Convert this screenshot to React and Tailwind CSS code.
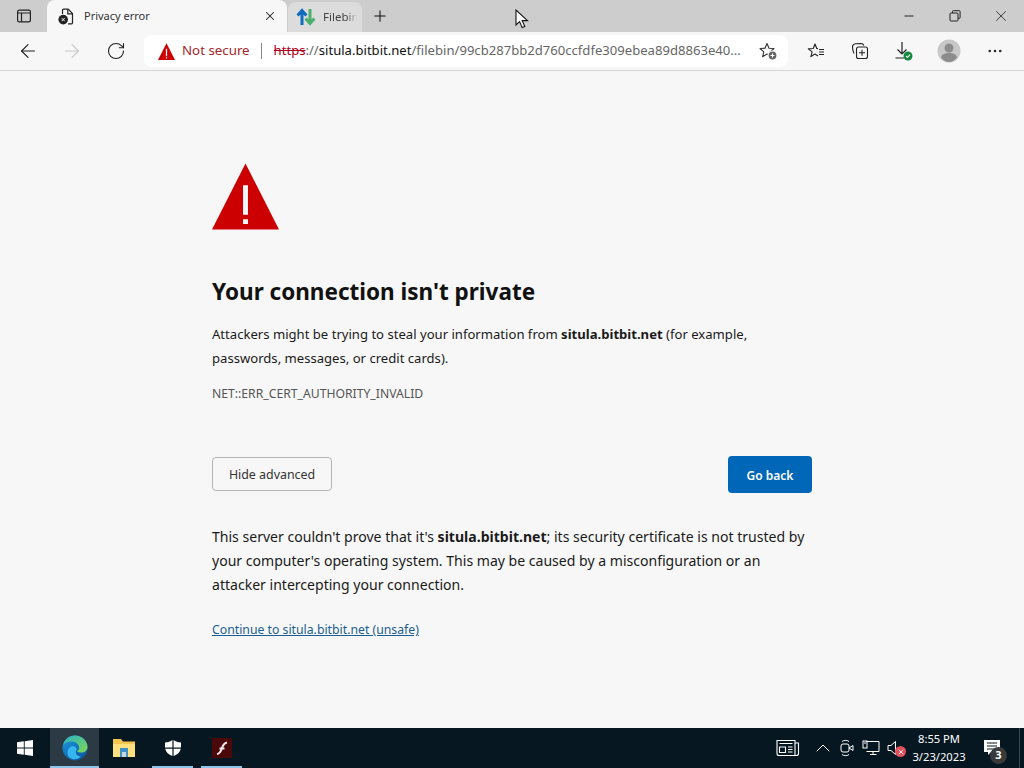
import React from 'react';
import { ArrowLeft, ArrowRight, RotateCw, Plus, X, Minus, MoreHorizontal, ChevronUp } from 'lucide-react';

const Sidebar = () => (
  <svg width="16" height="16" viewBox="0 0 16 16" fill="none" stroke="#222" strokeWidth="1.2">
    <rect x="1.6" y="2.1" width="12.8" height="11.8" rx="1.6" />
    <path d="M2 5h12M5.5 5v8.5" />
  </svg>
);

const PageError = () => (
  <svg width="16" height="17" viewBox="0 0 16 17" fill="none">
    <path d="M4.500 6V2.200A1 1 0 0 1 5.500 1.200h4.700L14.500 5.500v9.300a1 1 0 0 1-1 1H10" stroke="#222" strokeWidth="1.200" />
    <path d="M9.800 1.400v4.400h4.500" stroke="#222" strokeWidth="1.200" />
    <circle cx="5.200" cy="11.600" r="4.800" fill="#222" />
    <path d="M3.700 10.100l3 3M6.700 10.100l-3 3" stroke="#fff" strokeWidth="1" />
  </svg>
);

const Arrows = () => (
  <svg width="20" height="20" viewBox="0 0 20 20" fill="none" strokeWidth="3">
    <path d="M6 18V4M1.600 8.400L6 3.400l4.400 5" stroke="#0f6cbd" />
    <path d="M14 2v14M9.600 11.600l4.400 5 4.400-5" stroke="#4caf6e" />
  </svg>
);

const Warn = ({ size, className }) => (
  <svg width={size} height={size} viewBox="0 0 68 67" className={className}>
    <path d="M34 0L68 67H0Z" fill="#cc0000" />
    <path d="M31.500 22h5v30h-5zM31.500 56.500h5v5h-5z" fill="#f7f7f7" />
  </svg>
);

const StarAdd = () => (
  <svg width="20" height="20" viewBox="0 0 20 20" fill="none">
    <path d="M9 2.500l2 4.700 5 .3-3.800 3.300 1.200 4.900L9 13l-4.400 2.700 1.200-4.900L2 7.500l5-.3z" stroke="#333" strokeWidth="1.100" strokeLinejoin="round" />
    <circle cx="14.500" cy="14.500" r="5" fill="#fff" />
    <circle cx="14.500" cy="14.500" r="3.900" fill="#666" />
    <path d="M14.500 12.500v4M12.500 14.500h4" stroke="#fff" strokeWidth="1" />
  </svg>
);

const Favorites = () => (
  <svg width="18" height="18" viewBox="0 0 18 18" fill="none" stroke="#222" strokeWidth="1.100" strokeLinejoin="round">
    <path d="M11 6.600L9.760 6.570 8 2 6.240 6.570l-4.900.27 3.810 3.090-1.260 4.730L8 12l3 2" />
    <path d="M12 7.500h5M12 10h5M12 12.500h5" />
  </svg>
);

const Collections = () => (
  <svg width="18" height="18" viewBox="0 0 18 18" fill="none" stroke="#222" strokeWidth="1.100">
    <path d="M3 11.500C1.800 9 1.500 7 1.500 5c0-2 1.200-3 3-3.200L10 1.500c1.500 0 2.500.8 2.800 2" />
    <rect x="5.500" y="5" width="11" height="11.500" rx="2" />
    <path d="M11 7.800v6M8 10.800h6" />
  </svg>
);

const Download = () => (
  <svg width="20" height="20" viewBox="0 0 20 20" fill="none">
    <path d="M8 1v12M3.500 8.500L8 13l4.500-4.500M1.500 17h9" stroke="#222" strokeWidth="1.200" />
    <circle cx="14" cy="15" r="4.500" fill="#10893e" />
    <path d="M12 15l1.500 1.500 2.500-2.800" stroke="#fff" strokeWidth="1.100" />
  </svg>
);

const Avatar = () => (
  <svg width="24" height="24" viewBox="0 0 24 24">
    <circle cx="12" cy="12" r="11.500" fill="#c8c8c8" />
    <circle cx="12" cy="9" r="4.500" fill="#8c8c8c" />
    <path d="M4 18.500c1-3.500 4-4.500 8-4.500s7 1 8 4.500c-2 2.700-5 4.500-8 4.500s-6-1.800-8-4.500z" fill="#8c8c8c" />
  </svg>
);

const RestoreIcon = () => (
  <svg width="12" height="12" viewBox="0 0 12 12" fill="none" stroke="#222" strokeWidth="1">
    <rect x="1" y="3" width="8" height="8" rx="1" />
    <path d="M3.500 3V1.500a.8.8 0 0 1 .8-.8h6a.8.8 0 0 1 .8.8v6a.8.8 0 0 1-.8.8H9" />
  </svg>
);

const Cursor = () => (
  <svg width="14" height="20" viewBox="0 0 14 20" className="absolute left-[515px] top-[9px]">
    <path d="M1 1v15l3.600-3.400 2.600 6 2.600-1.100-2.600-5.900H12.500z" fill="#fff" stroke="#111" strokeWidth="1.100" />
  </svg>
);

const WinLogo = () => (
  <svg width="16" height="16" viewBox="0 0 16 16" fill="#fff">
    <path d="M0 2.300l6.800-1v6.300H0zM7.700 1.200L16 0v7.600H7.700zM0 8.400h6.800v6.300L0 13.700zM7.700 8.400H16V16l-8.300-1.200z" />
  </svg>
);

const EdgeLogo = () => (
  <svg width="26" height="26" viewBox="0 0 26 26">
    <defs>
      <linearGradient id="edgeBlue" x1="0" y1="0" x2="0.600" y2="1">
        <stop offset="0" stopColor="#1b9de2" />
        <stop offset="1" stopColor="#0c59a4" />
      </linearGradient>
      <linearGradient id="edgeGreen" x1="0" y1="0" x2="1" y2="1">
        <stop offset="0" stopColor="#2bb0c8" />
        <stop offset="1" stopColor="#7fd84f" />
      </linearGradient>
    </defs>
    <circle cx="13" cy="13" r="12.500" fill="url(#edgeBlue)" />
    <path d="M1 10C3 3.500 8 .5 13 .5c7 0 12.500 5.500 12.500 11.500 0 3.500-3 5.500-6 5.500-2 0-3.500-.5-4.500-1.500 2-1 2.500-2.500 2-4.500C16 8 13 6.500 9.500 6.500 6 6.500 2.800 8 1 10z" fill="url(#edgeGreen)" />
    <path d="M10 11c2 0 4.500 1 5 3.500-3 2.500-.5 7 4 7-2 2.500-7 4-11 1.500-4-3-3.500-10 2-12z" fill="#35b6ee" />
  </svg>
);

const FolderLogo = () => (
  <svg width="24" height="20" viewBox="0 0 24 20">
    <path d="M1 1h8l2 2.500h12V19H1z" fill="#f5c451" />
    <path d="M1 6h22v13H1z" fill="#ffdf7e" />
    <path d="M8 10h8v9H8z" fill="#3f8fc9" />
    <path d="M10 14h4v5h-4z" fill="#c9d6dc" />
  </svg>
);

const ShieldLogo = () => (
  <svg width="18" height="18" viewBox="0 0 18 18" fill="#fff">
    <path d="M8.400 1C6.500 2.600 4 3.400 1 3.500v5h7.400zM9.600 1c1.900 1.600 4.400 2.400 7.400 2.500v5H9.600zM1.200 9.700h7.200V17C4.600 15.500 2 13.500 1.200 9.700zM9.600 9.700h7.200C16 13.500 13.400 15.500 9.600 17z" />
  </svg>
);

const FlashLogo = () => (
  <div className="flex h-5 w-5 items-center justify-center bg-[#4a0808]">
    <svg width="14" height="16" viewBox="0 0 14 16" fill="none" stroke="#f0e8e8" strokeWidth="2.200">
      <path d="M2 14c3 0 4-3 5-6s2-5 5-5.500M4.500 8.500h5" />
    </svg>
  </div>
);

const News = () => (
  <svg width="24" height="18" viewBox="0 0 24 18" fill="none" stroke="#fff" strokeWidth="1.100">
    <path d="M1 1.500h18v15H3a2 2 0 0 1-2-2zM19 4h3.500v10.500a2 2 0 0 1-2 2H19" />
    <path d="M3.500 4.500h13M3.500 8h6v5.500h-6zM12 8h4.500M12 10.500h4.500M12 13h4.500" />
  </svg>
);

const MeetNow = () => (
  <svg width="16" height="18" viewBox="0 0 16 18" fill="none" stroke="#fff" strokeWidth="1">
    <rect x="2" y="5" width="8" height="8" rx="2" />
    <path d="M10 9l4-2.500v5L10 9zM3 2.500C5 1 8 1 10 2.500M3 15.500c2 1.500 5 1.500 7 0" />
  </svg>
);

const Network = () => (
  <svg width="18" height="18" viewBox="0 0 18 18" fill="none" stroke="#fff" strokeWidth="1">
    <path d="M4.500 2.500H17v10H4.500M8 15.500h6.500M11 12.500v3" />
    <rect x="1" y="2" width="4" height="7" />
    <path d="M2 4h2" />
  </svg>
);

const Speaker = () => (
  <div className="relative h-5 w-5">
    <svg width="12" height="16" viewBox="0 0 12 16" fill="none" stroke="#fff" strokeWidth="1" className="absolute left-0 top-0.5">
      <path d="M1 5.500h3L8.500 1.500v13L4 10.500H1z" />
    </svg>
    <span className="absolute left-2 top-2 flex h-[11px] w-[11px] items-center justify-center rounded-full bg-[#e2505c]">
      <X size={8} color="#fff" strokeWidth={2.500} />
    </span>
  </div>
);

const TaskItem = ({ active, running, children }) => (
  <div className={`relative flex h-10 w-[49px] items-center justify-center ${active ? 'bg-[#2b3a44]' : ''}`}>
    {children}
    {running && <span className={`absolute bottom-0 h-0.5 bg-[#8fc5ea] ${active ? 'inset-x-0' : 'inset-x-1'}`} />}
  </div>
);

export default function App() {
  return (
    <div className="relative flex h-[768px] w-[1024px] flex-col overflow-hidden bg-[#f7f7f7] font-['Noto_Sans','Open_Sans',sans-serif] text-[#1a1a1a]">
      {/* Tab strip */}
      <div className="flex h-8 shrink-0 items-end bg-[#cdcdcd]">
        <div className="flex h-8 w-[47px] items-center justify-center"><Sidebar /></div>
        <div className="flex h-[32px] w-[240px] items-center rounded-t-lg bg-[#f7f7f7] pl-[11px] pr-[10px]">
          <PageError />
          <span className="ml-[10px] flex-1 text-[11px] text-[#333]">Privacy error</span>
          <X size={14} color="#222" strokeWidth={1.800} />
        </div>
        <div className="ml-px flex h-[30px] w-[74px] items-center rounded-t-lg bg-[#dcdcdc] pl-[8px]">
          <Arrows />
          <span className="ml-[7px] w-[34px] overflow-hidden whitespace-nowrap text-[11.500px] text-[#444] mask-r-from-70%">Filebin</span>
        </div>
        <div className="ml-[2px] flex h-8 w-8 items-center justify-center"><Plus size={18} color="#111" strokeWidth={1.400} /></div>
        <div className="flex-1" />
        <div className="flex h-8 items-center">
          <div className="flex h-8 w-[46px] items-center justify-center"><Minus size={14} color="#111" strokeWidth={1.500} /></div>
          <div className="flex h-8 w-[46px] items-center justify-center"><RestoreIcon /></div>
          <div className="flex h-8 w-[46px] items-center justify-center"><X size={18} color="#222" strokeWidth={1.100} /></div>
        </div>
      </div>

      {/* Toolbar */}
      <div className="flex h-[39px] shrink-0 items-center border-b border-[#d4d4d4] bg-[#f7f7f7]">
        <div className="flex w-[144px] shrink-0 items-center pl-[17px]">
          <ArrowLeft size={22} color="#222" strokeWidth={1.300} />
          <ArrowRight size={22} color="#c8c8c8" strokeWidth={1.300} className="ml-[22px]" />
          <RotateCw size={20} color="#222" strokeWidth={1.300} className="ml-[23px]" />
        </div>
        <div className="flex h-[32px] w-[644px] shrink-0 items-center rounded-lg bg-white pl-[14px] pr-[10px]">
          <Warn size={17} />
          <span className="ml-[7px] text-[13.300px] text-[#a4262c]">Not secure</span>
          <span className="ml-[11px] mr-[12px] h-4 w-px bg-[#888]" />
          <span className="flex-1 overflow-hidden whitespace-nowrap text-[13.100px] text-[#666]">
            <span className="text-[#b00020] line-through">https</span>
            <span className="text-[#666]">://</span>
            <span className="text-[#111]">situla.bitbit.net</span>
            /filebin/99cb287bb2d760ccfdfe309ebea89d8863e40...
          </span>
          <StarAdd />
        </div>
        <div className="ml-[6px] flex items-center">
          <div className="flex w-[44px] justify-center"><Favorites /></div>
          <div className="flex w-[44px] justify-center"><Collections /></div>
          <div className="flex w-[44px] justify-center"><Download /></div>
          <div className="flex w-[46px] justify-center"><Avatar /></div>
          <div className="flex w-[46px] justify-center"><MoreHorizontal size={18} color="#222" strokeWidth={1.500} /></div>
        </div>
      </div>

      {/* Error page */}
      <main className="flex flex-1 justify-center">
        <div className="w-[600px] pt-[92px]">
          <Warn size={67} />
          <h1 className="mt-[44px] text-[22.500px] leading-[36px] font-bold text-[#111]">Your connection isn't private</h1>
          <p className="mt-[12px] text-[13.100px] leading-[24px]">
            Attackers might be trying to steal your information from <b>situla.bitbit.net</b> (for example,<br />
            passwords, messages, or credit cards).
          </p>
          <p className="mt-[12px] text-[12.200px] leading-[24px] text-[#555]">NET::ERR_CERT_AUTHORITY_INVALID</p>
          <div className="mt-[50px] flex items-start justify-between">
            <button className="mt-[1px] h-[34px] w-[120px] rounded-sm border border-[#b4b4b4] pt-[3px] text-[12.400px] text-[#333]">Hide advanced</button>
            <button className="h-[37px] w-[84px] rounded-sm bg-[#0067b8] pt-[3px] text-xs font-semibold text-white">Go back</button>
          </div>
          <p className="mt-[32px] text-[14.050px] leading-[24px]">
            This server couldn't prove that it's <b>situla.bitbit.net</b>; its security certificate is not trusted by<br />
            your computer's operating system. This may be caused by a misconfiguration or an<br />
            attacker intercepting your connection.
          </p>
          <a className="mt-[21px] block w-fit text-[12.250px] leading-[24px] text-[#1b5e8f] underline">Continue to situla.bitbit.net (unsafe)</a>
        </div>
      </main>

      {/* Taskbar */}
      <div className="flex h-10 shrink-0 items-center bg-[#071722] text-white">
        <div className="flex h-10 w-[50px] items-center justify-center"><WinLogo /></div>
        <TaskItem active running><EdgeLogo /></TaskItem>
        <TaskItem><FolderLogo /></TaskItem>
        <TaskItem running><ShieldLogo /></TaskItem>
        <TaskItem running><FlashLogo /></TaskItem>
        <div className="flex-1" />
        <div className="flex items-center">
          <News />
          <ChevronUp size={24} color="#fff" strokeWidth={1} className="ml-[11px]" />
          <div className="ml-[4px]"><MeetNow /></div>
          <div className="ml-[7px]"><Network /></div>
          <div className="ml-[7px]"><Speaker /></div>
          <div className="ml-[2px] w-[60px] text-center text-[11.200px] leading-[18px]">
            <div>8:55 PM</div>
            <div>3/23/2023</div>
          </div>
          <div className="relative ml-[15px] h-10 w-[35px]">
            <svg width="16" height="15" viewBox="0 0 16 15" className="absolute left-0 top-[12px]">
              <path d="M0 0h16v12H7l-3 3v-3H0z" fill="#fff" />
              <path d="M3 3h10M3 6h10M3 9h7" stroke="#071722" strokeWidth="1" />
            </svg>
            <span className="absolute left-[6px] top-[19px] flex h-[17px] w-[17px] items-center justify-center rounded-full bg-[#3a3a3a] text-[11px] font-bold">3</span>
          </div>
          <div className="h-10 w-[5px] border-l border-[#3a4750]" />
        </div>
      </div>

      <Cursor />
    </div>
  );
}
